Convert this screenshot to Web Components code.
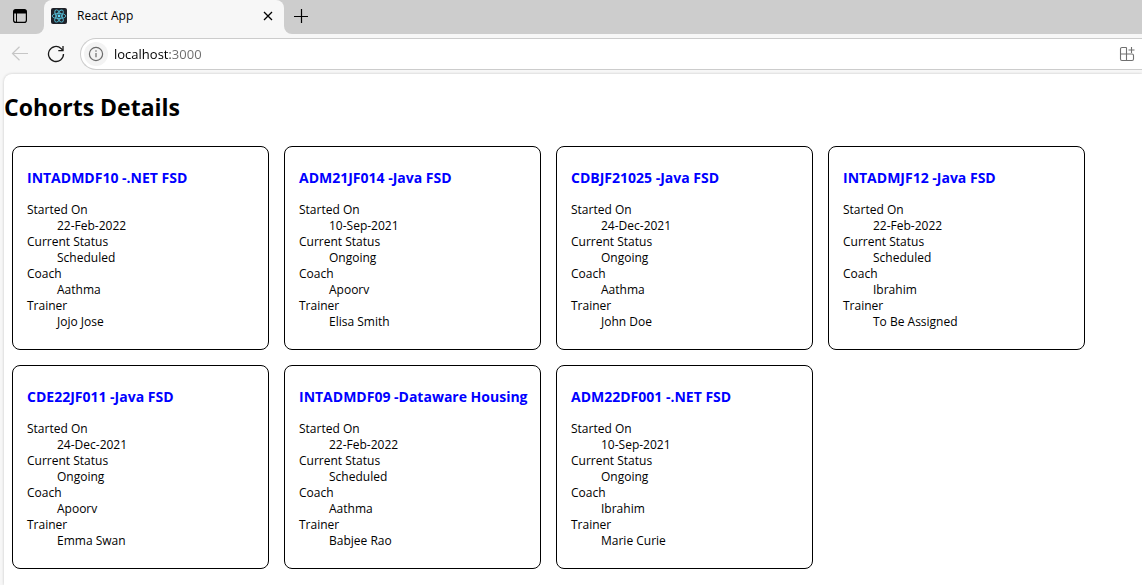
<!DOCTYPE html>
<html lang="en">
<head>
<meta charset="utf-8">
<title>React App</title>
<style>
  body { margin: 0; background: #fff; color: #000; font-family: "Open Sans", "Noto Sans", sans-serif; }
</style>
</head>
<body>
<browser-window>
  <tab-strip slot="tabs"><browser-tab>React App</browser-tab></tab-strip>
  <nav-bar slot="nav" host="localhost" port="3000"></nav-bar>
  <cohort-list heading="Cohorts Details">
    <cohort-card code="INTADMDF10" track=".NET FSD" started="22-Feb-2022" status="Scheduled" coach="Aathma" trainer="Jojo Jose"></cohort-card>
    <cohort-card code="ADM21JF014" track="Java FSD" started="10-Sep-2021" status="Ongoing" coach="Apoorv" trainer="Elisa Smith"></cohort-card>
    <cohort-card code="CDBJF21025" track="Java FSD" started="24-Dec-2021" status="Ongoing" coach="Aathma" trainer="John Doe"></cohort-card>
    <cohort-card code="INTADMJF12" track="Java FSD" started="22-Feb-2022" status="Scheduled" coach="Ibrahim" trainer="To Be Assigned"></cohort-card>
    <cohort-card code="CDE22JF011" track="Java FSD" started="24-Dec-2021" status="Ongoing" coach="Apoorv" trainer="Emma Swan"></cohort-card>
    <cohort-card code="INTADMDF09" track="Dataware Housing" started="22-Feb-2022" status="Scheduled" coach="Aathma" trainer="Babjee Rao"></cohort-card>
    <cohort-card code="ADM22DF001" track=".NET FSD" started="10-Sep-2021" status="Ongoing" coach="Ibrahim" trainer="Marie Curie"></cohort-card>
  </cohort-list>
</browser-window>
<script>
const define = (name, html, setup) => customElements.define(name, class extends HTMLElement {
  constructor() {
    super();
    const t = document.createElement('template');
    t.innerHTML = html;
    this.attachShadow({ mode: 'open' }).append(t.content.cloneNode(true));
  }
  connectedCallback() { if (setup) setup(this, this.shadowRoot); }
});

define('browser-window', `
<style>
  :host { display: flex; flex-direction: column; min-height: 100vh; background: #f7f7f7; }
  main { flex: 1; margin: 4px 0 0 4px; background: #fff; border-top-left-radius: 8px; box-shadow: 0 0 3px rgba(0,0,0,.2); }
</style>
<slot name="tabs"></slot>
<slot name="nav"></slot>
<main><slot></slot></main>`);

define('tab-strip', `
<style>
  :host { display: flex; height: 34px; background: #cdcdcd; }
  button { display: grid; place-items: center; padding: 0; border: 0; background: none; color: #000; }
  .menu { width: 44px; padding-right: 4px; border-bottom-right-radius: 8px; background: #cdcdcd; }
  .rest { flex: 1; display: flex; background: #cdcdcd; border-bottom-left-radius: 8px; }
  .back { display: flex; flex: 1; background: #f7f7f7; }
  .add { width: 34px; }
  svg { display: block; }
  .add svg { margin-bottom: 2px; }
  .menu svg { margin-bottom: 2px; }
</style>
<div class="back">
<button class="menu" aria-label="Tab actions">
  <svg width="14" height="14" viewBox="0 0 14 14"><rect x=".6" y=".6" width="12.8" height="12.8" rx="2.2" fill="none" stroke="#000" stroke-width="1.2"/><path d="M.6 4.5V3A2.4 2.4 0 0 1 3 .6h8A2.4 2.4 0 0 1 13.400 3v1.500z"/><path d="M3.500 4v9.500" stroke="#000"/></svg>
</button>
<slot></slot>
<div class="rest"><button class="add" aria-label="New tab">
  <svg width="14" height="14" viewBox="0 0 14 14" stroke="#000" stroke-width="1.200"><path d="M7.500 0v14M0 7.500h14"/></svg>
</button></div>
</div>`);

define('browser-tab', `
<style>
  :host { display: flex; align-items: center; gap: 10px; box-sizing: border-box; width: 240px; height: 34px; padding: 0 10px 2px 7px;
    background: linear-gradient(#cdcdcd 50%, #f7f7f7 50%); position: relative; z-index: 0; }
  :host::before { content: ""; position: absolute; inset: 0; z-index: -1; background: #f7f7f7; border-radius: 8px 8px 0 0; }
  span { flex: 1; font-size: 12px; line-height: 16px; }
  button { display: grid; place-items: center; width: 12px; height: 16px; padding: 0; border: 0; background: none; }
</style>
<svg width="16" height="16" viewBox="0 0 16 16"><rect width="16" height="16" rx="2" fill="#20232a"/><g fill="none" stroke="#53b9d1" stroke-width=".9"><ellipse cx="8" cy="8" rx="6.800" ry="2.600"/><ellipse cx="8" cy="8" rx="6.800" ry="2.600" transform="rotate(60 8 8)"/><ellipse cx="8" cy="8" rx="6.800" ry="2.600" transform="rotate(120 8 8)"/></g><circle cx="8" cy="8" r="1.400" fill="#61dafb"/></svg>
<span><slot></slot></span>
<button aria-label="Close tab"><svg width="10" height="10" viewBox="0 0 10 10"><path d="M1 1l8 8M9 1L1 9" stroke="#000" stroke-width="1.300"/></svg></button>`);

define('nav-bar', `
<style>
  :host { display: flex; align-items: center; height: 32px; padding: 4px 0 0 10px; }
  button { display: grid; place-items: center; padding: 0; border: 0; background: none; }
  .nav { width: 20px; height: 20px; margin-right: 16px; }
  .reload { margin-right: 14px; }
  .address { flex: 1; display: flex; align-items: center; box-sizing: border-box; height: 32px; padding: 0 7px 0 3px;
    background: #fff; border: 1px solid #ccc; border-right: 0; border-radius: 16px 0 0 16px; }
  .info { width: 24px; height: 24px; border-radius: 50%; background: #f3f3f3; margin-right: 6px; }
  input { flex: 1; min-width: 0; padding: 0; border: 0; outline: 0; font: 13px/20px "Open Sans", "Noto Sans", sans-serif;
    background: linear-gradient(90deg, #000 56px, #6b6b6b 56px); -webkit-background-clip: text; background-clip: text; color: transparent; caret-color: #000; }
</style>
<button class="nav" aria-label="Back"><svg width="18" height="16" viewBox="0 0 18 16" fill="none" stroke="#c6c6c6" stroke-width="1.200"><path d="M17 7.500H1.500M8.500 .8L1.500 7.500l7 6.700"/></svg></button>
<button class="nav reload" aria-label="Reload"><svg width="18" height="18" viewBox="0 0 18 18" fill="none" stroke="#1a1a1a" stroke-width="1.300"><path d="M16.500 9A7.500 7.500 0 1 1 14 3.400L16 5.500"/><path d="M16 1v4.700h-4.700"/></svg></button>
<div class="address">
  <button class="info" aria-label="Site information"><svg width="16" height="16" viewBox="0 0 16 16" fill="none" stroke="#6b6b6b"><circle cx="8" cy="8" r="6.600" stroke-width="1.200"/><path d="M8 7v4.300" stroke-width="1.200"/><circle cx="8" cy="5" r=".8" fill="#6b6b6b" stroke="none"/></svg></button>
  <input type="text" aria-label="Address" spellcheck="false">
  <button aria-label="Apps"><svg width="16" height="16" viewBox="0 0 16 16" fill="none" stroke="#707070" stroke-width="1.100"><path d="M7.500 1.500H3A1.500 1.500 0 0 0 1.500 3v10A1.500 1.500 0 0 0 3 14.500h10a1.500 1.500 0 0 0 1.500-1.500V9.500a1.500 1.500 0 0 0-1.500-1.500H1.500M7.500 1.500v13M12.500 1v6M9.500 4h6"/></svg></button>
</div>`, (el, root) => {
  const value = el.getAttribute('host') + ':' + el.getAttribute('port');
  root.querySelector('input').value = value;
  root.querySelector('input').setAttribute('value', value);
});

define('cohort-list', `
<style>
  :host { display: block; }
  h1 { margin: 0; padding: 17px 0 23px; font-size: 23px; line-height: 32px; }
  .grid { display: grid; grid-template-columns: repeat(auto-fill, 257px); gap: 15px; padding: 0 8px 16px; }
</style>
<h1></h1>
<div class="grid"><slot></slot></div>`, (el, root) => {
  root.querySelector('h1').textContent = el.getAttribute('heading');
});

define('cohort-card', `
<style>
  :host { display: block; box-sizing: border-box; padding: 22px 15px 19px 14px; border: 1px solid #000; border-radius: 8px; }
  h2 { margin: 0 0 15px; font-size: 14px; line-height: 18px; color: #00f; white-space: nowrap; }
  dl { margin: 0; font-size: 12px; line-height: 16px; }
  dd { margin: 0 0 0 30px; }
</style>
<h2></h2>
<dl>
  <dt>Started On</dt><dd data-field="started"></dd>
  <dt>Current Status</dt><dd data-field="status"></dd>
  <dt>Coach</dt><dd data-field="coach"></dd>
  <dt>Trainer</dt><dd data-field="trainer"></dd>
</dl>`, (el, root) => {
  root.querySelector('h2').textContent = el.getAttribute('code') + ' -' + el.getAttribute('track');
  for (const dd of root.querySelectorAll('dd')) dd.textContent = el.getAttribute(dd.dataset.field);
});
</script>
</body>
</html>
